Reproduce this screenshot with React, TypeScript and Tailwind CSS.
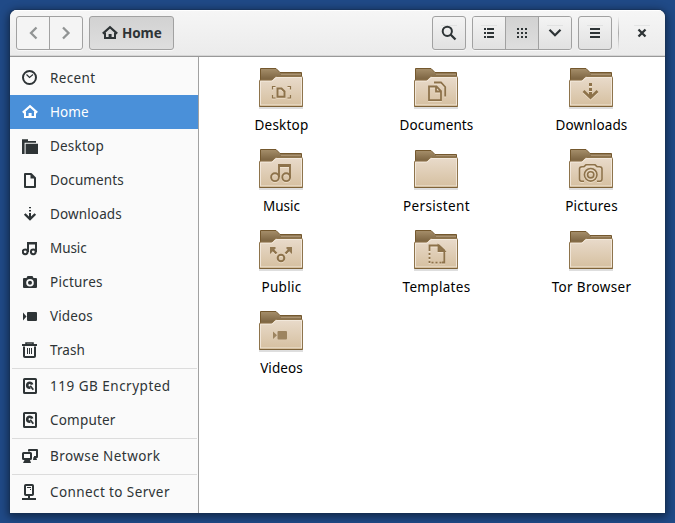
import React from "react";

const sym: Record<string, React.ReactNode> = {
  recent: (
    <g fill="none" stroke="currentColor">
      <circle cx="7.5" cy="7.5" r="6.5" strokeWidth="2" />
      <path d="M4.5 4.5 7.5 7.5 11 4.5" strokeWidth="1.2" />
    </g>
  ),
  home: (
    <g>
      <path d="M.8 8.6 8 2.2 15.2 8.6" fill="none" stroke="currentColor" strokeWidth="2.1" />
      <path d="M3 7.5V13H13V7.5" fill="none" stroke="currentColor" strokeWidth="2" />
      <path d="M6.6 9H9.6V13H6.6Z" fill="currentColor" />
    </g>
  ),
  desktop: (
    <path d="M0 1.2H6V3H14V4.8H2.6V16H0ZM3.6 5.7H16V16H3.6Z" fill="currentColor" />
  ),
  documents: (
    <g>
      <path d="M3 2H9L13 6V15H3Z" fill="none" stroke="currentColor" strokeWidth="2" strokeLinejoin="round" />
      <path d="M8.5 2V6.5H13Z" fill="currentColor" />
    </g>
  ),
  downloads: (
    <g fill="none" stroke="currentColor" strokeWidth="2">
      <path d="M8 1V2.2M8 4V5.5M8 7V12" />
      <path d="M2.7 8 8 13 13.3 8" strokeWidth="2.4" />
    </g>
  ),
  music: (
    <g fill="none" stroke="currentColor" strokeWidth="2">
      <circle cx="3.2" cy="11.8" r="2.4" />
      <circle cx="11.3" cy="11.8" r="2.4" />
      <path d="M6 12V3H14V12" />
      <path d="M6 3.5H14" />
    </g>
  ),
  pictures: (
    <path d="M2 4H4.5L5.5 2H10.5L11.5 4H14Q15 4 15 5V13Q15 14 14 14H2Q1 14 1 13V5Q1 4 2 4ZM8 5A3.8 3.8 0 1 0 8 12.6 3.8 3.8 0 1 0 8 5ZM8 6.8A2 2 0 1 1 8 10.8 2 2 0 1 1 8 6.8Z" fill="currentColor" fillRule="evenodd" />
  ),
  videos: (
    <path d="M6 4H14Q15 4 15 5V12Q15 13 14 13H6Q5 13 5 12V5Q5 4 6 4ZM1 4.5 4.5 8.5 1 12.5Z" fill="currentColor" />
  ),
  trash: (
    <g fill="none" stroke="currentColor">
      <path d="M0 3H15" strokeWidth="2" />
      <path d="M4 2.5V1H11V2.5" strokeWidth="1.6" />
      <path d="M2 4.5V14.2Q2 15 3 15H12Q13 15 13 14.2V4.5" strokeWidth="2" />
      <path d="M5.5 6V12M7.5 6V12M9.5 6V12" />
    </g>
  ),
  drive: (
    <g>
      <rect x="2" y="1" width="12" height="14" rx=".6" fill="none" stroke="currentColor" strokeWidth="2" />
      <circle cx="7.7" cy="7.3" r="2.5" fill="none" stroke="currentColor" strokeWidth="2.6" strokeDasharray="11.4 4.3" strokeDashoffset="-3.2" />
      <path d="M8.2 7.7 11.3 11.8" stroke="currentColor" strokeWidth="1.8" />
    </g>
  ),
  network: (
    <g>
      <path d="M7 3.5V2H15V9H12" fill="none" stroke="currentColor" strokeWidth="2" strokeLinejoin="round" />
      <path d="M11.5 9H14L15 12H11Z" fill="currentColor" />
      <rect x="1" y="5" width="8" height="6" rx=".5" fill="none" stroke="currentColor" strokeWidth="2" />
      <path d="M2.5 12H8L9 15H1Z" fill="currentColor" />
    </g>
  ),
  server: (
    <g fill="none" stroke="currentColor">
      <rect x="3" y="1" width="8" height="10" rx=".8" strokeWidth="2" />
      <path d="M5 3.5H9M8 5.5H9" />
      <path d="M7 12V15M0 15H14" strokeWidth="2" />
    </g>
  ),
};

function Sym({ name }: { name: string }) {
  return (
    <svg className="h-4 w-4 shrink-0" viewBox="0 0 16 16">
      {sym[name]}
    </svg>
  );
}

type Item = [string, string, string];
const groups: Item[][] = [
  [
    ["recent", "Recent", "tracking-[0.35px]"],
    ["home", "Home", "tracking-[0.1px]"],
    ["desktop", "Desktop", "tracking-[0.2px]"],
    ["documents", "Documents", "tracking-[0.13px]"],
    ["downloads", "Downloads", "tracking-[0.13px]"],
    ["music", "Music", "tracking-[-0.1px]"],
    ["pictures", "Pictures", "tracking-[0.25px]"],
    ["videos", "Videos", "tracking-[0.1px]"],
    ["trash", "Trash", "tracking-[0.1px]"],
  ],
  [
    ["drive", "119 GB Encrypted", "tracking-[0.5px]"],
    ["drive", "Computer", "tracking-[0.2px]"],
  ],
  [["network", "Browse Network", "tracking-[0.42px]"]],
  [["server", "Connect to Server", "tracking-[0.4px]"]],
];

const emblems: Record<string, React.ReactNode> = {
  Desktop: (
    <g>
      <path d="M13.5 21.5V18.5H16.5M28.5 18.5H31.5V21.5M13.5 27V30H16.5M28.5 30H31.5V27" strokeWidth="1.2" />
      <path d="M18.5 20.5H22.5L25.5 23.5V28.8H18.5Z" strokeWidth="2" />
    </g>
  ),
  Documents: (
    <g strokeWidth="1.8">
      <path d="M15 18.5H22.5L27 23V32.2H15ZM22 18.5V23.5H27" />
      <path d="M20 14.5H27L31.2 19V28.5" />
    </g>
  ),
  Downloads: (
    <g>
      <path d="M21.5 15V18M21.5 20V23M21.5 24V30" strokeWidth="3" />
      <path d="M14.5 23 21.5 29.8 28.5 23" strokeWidth="2.6" />
    </g>
  ),
  Music: (
    <g strokeWidth="1.9">
      <circle cx="16" cy="28.2" r="3.9" />
      <circle cx="27.2" cy="28.2" r="3.9" />
      <path d="M20 28V16H31V28M20 17H31" />
    </g>
  ),
  Pictures: (
    <g strokeWidth="1.6">
      <path d="M15 32.2H12.5Q10.5 32.2 10.5 30V20Q10.5 17.7 13 17.7H15L17 15.8H26L28 17.7H30.5Q33 17.7 33 20V30Q33 32.2 31 32.2H28" />
      <circle cx="21.7" cy="25.8" r="6.3" />
      <circle cx="21.7" cy="25.8" r="3.1" />
    </g>
  ),
  Public: (
    <g strokeWidth="2">
      <circle cx="22" cy="28" r="3.3" />
      <path d="M17.5 23.5 13 19M26.5 23.5 31 19" strokeWidth="2.4" />
      <path d="M11 17H17L11 23ZM33 17H27L33 23Z" fill="#927851" stroke="none" />
    </g>
  ),
  Templates: (
    <g strokeWidth="1.8">
      <path d="M15.5 21V15.5H25L30.3 20.5V32.5H28" />
      <path d="M24.5 15.5V21H30.3Z" fill="#927851" />
      <path d="M15.5 23V33.5M17.5 32.6H28" strokeDasharray="2 2" />
    </g>
  ),
  Videos: (
    <path d="M19.5 20H27Q28 20 28 21V27.5Q28 28.5 27 28.5H19.5Q18.5 28.5 18.5 27.5V21Q18.5 20 19.5 20ZM14 20.5 18 24.3 14 28Z" fill="#9d8460" stroke="none" />
  ),
};

function Folder({ name }: { name: string }) {
  const plain = !emblems[name];
  return (
    <svg className="mr-px h-12 w-12" viewBox="-2 -4 48 48">
      <defs>
        <linearGradient id="front" x2="0" y2="1">
          <stop stopColor="#e9dbcb" />
          <stop offset="1" stopColor="#d5bf9f" />
        </linearGradient>
        <linearGradient id="back" x2="0" y2="1">
          <stop stopColor="#a68f6b" />
          <stop offset=".5" stopColor="#806845" />
        </linearGradient>
      </defs>
      <path d="M0 39.5H44M0 40.5H44" stroke="#000" strokeOpacity=".13" />
      <path d={plain ? "M1.5 20V1.5H17L21 5.5H42.5V20Z" : "M1.5 20V.5H17L21 4.5H42.5V20Z"} fill="url(#back)" stroke="#74582e" strokeLinejoin="round" />
      <path d="M22 6.5H42" stroke="#aa9270" />
      <path d="M.5 12.5Q.5 12.2 1 12.2H12Q13 12.2 14 11L16 9Q16.7 8.5 17.5 8.5H42.5Q43.5 8.5 43.5 9.5V38.5H.5Z" fill="url(#front)" stroke="#8e744c" strokeLinejoin="round" />
      <path d="M1.5 37V13.2H12.5Q14 13 15 11.5L16.5 10Q17 9.5 18 9.5H42.5V37" fill="none" stroke="#f3e9dd" strokeOpacity=".9" />
      <path d="M2 36.5H42" stroke="#e3d4bd" />
      <path d="M.5 38.5H43.5" stroke="#7d6238" />
      <g transform="translate(0 1)" fill="none" stroke="#fff5e5" strokeOpacity=".5">{name === "Videos" ? null : emblems[name]}</g>
      <g fill="none" stroke="#8d724a">{emblems[name]}</g>
    </svg>
  );
}

const files: [string, string][] = [
  ["Desktop", "tracking-[0.2px]"],
  ["Documents", "tracking-[0.13px]"],
  ["Downloads", "tracking-[0.13px]"],
  ["Music", "tracking-[0px]"],
  ["Persistent", "tracking-[0.35px]"],
  ["Pictures", "tracking-[0.25px]"],
  ["Public", "tracking-[0.25px]"],
  ["Templates", "tracking-[0.3px]"],
  ["Tor Browser", "tracking-[0.32px]"],
  ["Videos", "tracking-[0.1px]"],
];

const raised = "bg-linear-to-b from-[#f4f4f4] to-[#e1e1e1]";
const pressed = "bg-linear-to-b from-[#d2d2d2] to-[#dedede]";
const box = "flex h-[34px] overflow-hidden rounded-[3px] border border-[#a1a1a1] shadow-[0_1px_0_#fff9]";

function Glyph({ d, w = 2, edge = false }: { d: string; w?: number; edge?: boolean }) {
  return (
    <svg className="h-4 w-4" viewBox="0 0 16 16" fill="none" stroke="currentColor" strokeWidth={w}>
      {edge && <path d="M0 .5H16" strokeWidth="1" strokeOpacity=".07" />}
      <path d={d} />
    </svg>
  );
}

export default function App() {
  return (
    <div className="h-[523px] w-[675px] overflow-hidden bg-[#204a87] p-2.5 font-['Noto_Sans',sans-serif] text-[13.5px] text-[#2e3436]">
      <div className="flex h-[503px] w-[655px] flex-col overflow-hidden rounded-t-[7px] bg-white shadow-[0_0_0_1px_#172f5270,0_2px_8px_2px_#0007]">
        <header className="flex h-[47px] shrink-0 items-start border-b border-[#999] bg-linear-to-b from-[#f6f6f6] to-[#ebebeb] pt-1.5 pl-1.5 shadow-[inset_0_1px_0_#fff,inset_0_-1px_0_#d6d6d6]">
          <div className={`${box} w-[67px] bg-[#f4f4f4] text-[#919494]`}>
            <div className="flex w-[33px] items-center justify-center border-r border-[#a1a1a1]"><Glyph d="M11.5 2.5 6 8 11.5 13.5" w={2.3} /></div>
            <div className="flex flex-1 items-center justify-center"><Glyph d="M5 2.5 10.5 8 5 13.5" w={2.3} /></div>
          </div>
          <div className={`${box} ${pressed} ml-1.5 w-[85px] items-center gap-1 pl-3 font-bold`}>
            <Sym name="home" />
            <span className="tracking-[-0.1px]">Home</span>
          </div>
          <div className={`${box} ${raised} ml-[258px] w-[34px] items-center justify-center`}>
            <svg className="h-4 w-4" viewBox="0 0 16 16" fill="none" stroke="currentColor">
              <path d="M0 .5H16" strokeOpacity=".07" />
              <circle cx="6.3" cy="6.3" r="4.6" strokeWidth="2" />
              <path d="M9.5 9.5 14.5 14.5" strokeWidth="2.3" />
            </svg>
          </div>
          <div className={`${box} ml-1.5 w-[100px]`}>
            <div className={`flex w-[33px] items-center justify-center border-r border-[#a1a1a1] ${raised}`}><Glyph edge d="M3 4H5M6 4H13M3 8H5M6 8H13M3 12H5M6 12H13" /></div>
            <div className={`flex w-[33px] items-center justify-center border-r border-[#a1a1a1] ${pressed}`}><Glyph d="M3 4H5M7 4H9M11 4H13M3 8H5M7 8H9M11 8H13M3 12H5M7 12H9M11 12H13" /></div>
            <div className={`flex flex-1 items-center justify-center ${raised}`}><Glyph edge d="M2.5 4.8 8 10.2 13.5 4.8" w={2.3} /></div>
          </div>
          <div className={`${box} ${raised} ml-1.5 w-[34px] items-center justify-center`}><Glyph edge d="M3 4H13M3 8H13M3 12H13" /></div>
          <div className="ml-1.5 h-[34px] w-px bg-linear-to-b from-transparent via-[#aaa] to-transparent" />
          <div className="ml-[15px] flex h-[34px] items-center"><Glyph edge d="M4.5 4.5 11.5 11.5M11.5 4.5 4.5 11.5" w={2.3} /></div>
        </header>
        <div className="flex min-h-0 flex-1">
          <nav className="w-[189px] shrink-0 border-r border-[#a1a1a1] bg-[#fafafa] pt-1">
            {groups.map((g, i) => (
              <div key={i}>
                {i > 0 && <div className="mr-px ml-0.5 mt-px h-px bg-[#dcdcdc]" />}
                {g.map(([icon, label, track]) => (
                  <div key={label} className={`flex h-[34px] items-center gap-3 pl-3 whitespace-nowrap ${label === "Home" ? "bg-[#4a90d9] text-white" : ""}`}>
                    <Sym name={icon} />
                    <span className={track}>{label}</span>
                  </div>
                ))}
              </div>
            ))}
          </nav>
          <main className="grid flex-1 auto-rows-[81px] grid-cols-[155px_155px_155px] content-start pt-[7px] pl-[5px] text-black">
            {files.map(([name, track]) => (
              <div key={name} className="flex flex-col items-center gap-[3px] whitespace-nowrap">
                <Folder name={name} />
                <span className={`leading-5 ${track}`}>{name}</span>
              </div>
            ))}
          </main>
        </div>
      </div>
    </div>
  );
}
